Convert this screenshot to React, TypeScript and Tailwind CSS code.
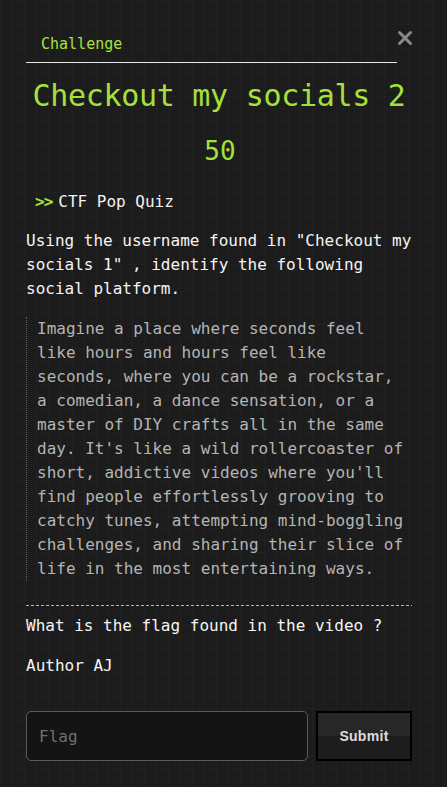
import { useState } from "react";

export default function App() {
    const [flag, setFlag] = useState("");

    return (
        <div className="min-h-screen bg-[#1c1c1c] bg-[linear-gradient(rgba(255,255,255,0.015)_1px,transparent_1px),linear-gradient(90deg,rgba(255,255,255,0.015)_1px,transparent_1px)] bg-[size:12px_12px] pl-[26px] pr-[35px] pt-[32px] pb-[26px] font-['DejaVu_Sans_Mono',monospace] text-[16px]">
            {/* header tabs */}
            <div className="flex items-start">
                <div className="flex-1 border-b border-[#e5e5e5] pb-[6px] pl-[15px]">
                    <span className="leading-[24px] text-[15px] text-[#a6e13b]">Challenge</span>
                </div>
                <button className="w-[16px] h-[16px] -mt-[2px] -mr-[1px] text-[#8a8a8a]">
                    <svg width="16" height="16" viewBox="0 0 16 16" fill="none" stroke="currentColor" strokeWidth="3" strokeLinecap="round">
                        <path d="M2.5 2.5l11 11M13.5 2.5l-11 11" />
                    </svg>
                </button>
            </div>

            <h1 className="mt-[13px] text-[30px] leading-[40px] text-[#a6e13b] text-center tracking-[-0.3px]">
                Checkout my socials 2
            </h1>
            <p className="mt-[18px] text-[26px] leading-[34px] text-[#a6e13b] text-center pl-[2px]">50</p>

            <div className="mt-[22px] pl-[9px] leading-[24px] text-[#f2f2f2] flex gap-[6px]">
                <span className="text-[#a6e13b] font-bold tracking-[-1px]">&gt;&gt;</span>
                <span>CTF Pop Quiz</span>
            </div>

            <p className="mt-[15px] leading-[24px] text-[#f5f5f5]">
                Using the username found in "Checkout my socials 1" , identify the following social platform.
            </p>

            <blockquote className="mt-[16px] border-l border-dotted border-[#666] pl-[10px] leading-[24px] text-[#b4b4b4]">
                Imagine a place where seconds feel like hours and hours feel like seconds, where you can be a rockstar, a comedian, a dance sensation, or a master of DIY crafts all in the same day. It's like a wild rollercoaster of short, addictive videos where you'll find people effortlessly grooving to catchy tunes, attempting mind-boggling challenges, and sharing their slice of life in the most entertaining ways.
            </blockquote>

            {/* dashed divider */}
            <div className="mt-[24px] h-px bg-[repeating-linear-gradient(90deg,#a9d92c_0px,#a9d92c_3px,transparent_3px,transparent_5px)]" />

            <p className="mt-[8px] leading-[24px] text-[#f5f5f5]">What is the flag found in the video ?</p>
            <p className="mt-[16px] leading-[24px] text-[#f5f5f5]">Author AJ</p>

            <form className="mt-[33px] flex gap-[8px]" onSubmit={(e) => e.preventDefault()}>
                <input
                    type="text"
                    value={flag}
                    onChange={(e) => setFlag(e.target.value)}
                    placeholder="Flag"
                    className="flex-1 min-w-0 h-[50px] rounded-[5px] border border-[#5a5a5a] bg-[#141414] pl-[12px] text-[16px] text-[#ddd] placeholder-[#6b6f74] outline-none"
                />
                <button
                    type="submit"
                    className="w-[96px] h-[50px] border-2 border-black bg-[linear-gradient(#272727_50%,#1d1d1d_50%)] font-['Liberation_Sans',Arial,sans-serif] font-bold text-[14px] text-[#dcdcdc] tracking-[0.3px]"
                >
                    Submit
                </button>
            </form>
        </div>
    );
}
